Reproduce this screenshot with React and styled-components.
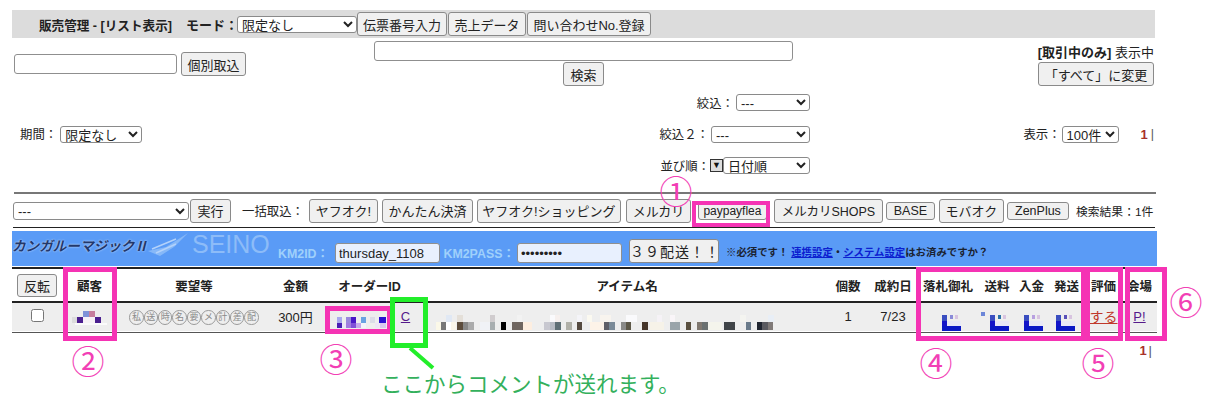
import React from "react";
import styled, { createGlobalStyle } from "styled-components";

const Global = createGlobalStyle`
  html, body { margin: 0; padding: 0; background: #fff; overflow: hidden; }
  body { font-family: "Liberation Sans", "Noto Sans CJK JP", sans-serif; font-size: 13px; color: #222; }
`;

const Page = styled.div`
  position: relative;
  width: 1213px;
  height: 415px;
  overflow: hidden;
  padding: 10px 56px 0 12px;
  box-sizing: border-box;
`;

const Button = styled.button`
  font: ${(p) => p.$fs || 13}px "Liberation Sans", "Noto Sans CJK JP", sans-serif;
  color: #222;
  height: ${(p) => p.$h || 24}px;
  width: ${(p) => (p.$w ? `${p.$w}px` : "auto")};
  padding: 0;
  background: #f0f0f0;
  border: 1px solid #8a8a8a;
  border-radius: 3px;
  white-space: nowrap;
  flex: none;
`;

const Select = styled.select`
  font: 13px "Liberation Sans", "Noto Sans CJK JP", sans-serif;
  color: #222;
  width: ${(p) => p.$w}px;
  height: ${(p) => p.$h || 17}px;
  padding: 0;
  background: #fff;
  border: 1px solid #8a8a8a;
  border-radius: 3px;
  flex: none;
`;

const TextInput = styled.input`
  box-sizing: border-box;
  width: ${(p) => p.$w}px;
  height: ${(p) => p.$h || 20}px;
  margin: 0;
  padding: 0 3px;
  font: 13px "Liberation Sans", sans-serif;
  color: #222;
  background: ${(p) => p.$bg || "#fff"};
  border: 1px solid #8f8f8f;
  border-radius: 3px;
  flex: none;
`;

const HeaderBar = styled.div`
  display: flex;
  align-items: center;
  height: 28px;
  padding-left: 27px;
  background: #dcdcdc;
  width: 1143px;
  box-sizing: border-box;
`;
const HeaderTitle = styled.b`
  font-size: 12.6px;
  width: 147px;
  flex: none;
  white-space: nowrap;
`;
const HeaderLabel = styled.b`
  width: 51px;
  flex: none;
  white-space: nowrap;
`;

const SearchRow = styled.div`
  display: grid;
  grid-template-columns: 362px 419px 1fr;
  height: 48px;
  width: 1143px;
`;
const SingleFetch = styled.div`
  display: flex;
  align-items: center;
  gap: 4px;
  padding: 14px 0 0 2px;
  height: 24px;
`;
const CenterSearch = styled.div`
  display: flex;
  flex-direction: column;
  align-items: center;
  padding-top: 3px;
  gap: 1px;
`;
const StatusBox = styled.div`
  display: flex;
  flex-direction: column;
  align-items: flex-end;
  justify-content: flex-end;
  padding-right: 1px;
  gap: 1px;
`;

const FilterRow = styled.div`
  display: grid;
  grid-template-columns: 560px 238px 1fr;
  width: 1143px;
  margin-top: 8px;
  height: 80px;
  font-size: 12.4px;
`;
const PeriodCell = styled.div`
  display: flex;
  align-items: center;
  padding-left: 8px;
  gap: 3px;
`;
const FilterStack = styled.div`
  display: flex;
  flex-direction: column;
  align-items: flex-end;
  justify-content: space-between;
`;
const FilterLine = styled.div`
  display: flex;
  align-items: center;
  gap: ${(p) => p.$gap ?? 2}px;
  height: 17px;
  white-space: nowrap;
`;
const SortIcon = styled.span`
  display: inline-flex;
  align-items: center;
  justify-content: center;
  box-sizing: border-box;
  width: 13px;
  height: 13px;
  border: 1px solid #333;
  background: #ddd;
  color: #111;
  font-size: 9px;
  line-height: 1;
`;
const DisplayCell = styled.div`
  display: flex;
  align-items: center;
  justify-content: flex-end;
  gap: 1px;
`;
const PageNum = styled.b`
  color: #a8322a;
  font-size: 13px;
  margin-left: 21px;
`;
const PageBar = styled.span`
  color: #555;
  margin-left: 2px;
  margin-right: 1px;
`;

const Rule = styled.hr`
  border: 0;
  height: ${(p) => p.$t || 1}px;
  background: ${(p) => p.$c || "#333"};
  margin: ${(p) => p.$m || 0};
  width: 1142px;
`;

const Toolbar = styled.div`
  display: flex;
  align-items: center;
  height: 33px;
  width: 1143px;
  padding-left: 1px;
  box-sizing: border-box;
  white-space: nowrap;
`;
const ToolButton = styled(Button)`
  margin-left: ${(p) => p.$ml ?? 4}px;
`;
const ToolLabel = styled.span`
  margin-left: ${(p) => p.$ml}px;
  flex: none;
  font-size: ${(p) => p.$fs || 12.4}px;
`;

const Band = styled.div`
  display: flex;
  width: 1145px;
  height: 35px;
  margin-top: 3px;
  background: #5a9bf6;
`;
const Brand = styled.div`
  display: flex;
  align-items: center;
  height: 27px;
  width: 266px;
  flex: none;
`;
const BrandName = styled.b`
  color: #22386b;
  font-style: italic;
  font-size: 13.6px;
  white-space: nowrap;
  width: 134px;
  flex: none;
  text-shadow: 0 0 2px #dbe9ff;
`;
const SeinoMark = styled.span`
  color: #8dbcf8;
  font-size: 25px;
  margin-left: 2px;
`;
const BandForm = styled.div`
  display: flex;
  align-items: center;
  height: 35px;
  padding-top: 9px;
  box-sizing: border-box;
`;
const BandLabel = styled.b`
  color: #9fd0fb;
  font-size: 12.4px;
  white-space: nowrap;
  width: ${(p) => p.$w}px;
  flex: none;
`;
const ShipButton = styled(Button)`
  margin: 0 7px 4px 7px;
  letter-spacing: 1px;
  font-size: 14px;
`;
const BandNote = styled.b`
  color: #1a2230;
  font-size: 10.4px;
  white-space: nowrap;
  margin-bottom: 3px;
`;
const BandLink = styled.a`
  color: #0c20d0;
  text-decoration: underline;
`;

const Table = styled.table`
  border-collapse: collapse;
  table-layout: fixed;
  width: 1145px;
  margin-top: 1px;
`;
const HeadCell = styled.th`
  height: 34px;
  padding: 0 ${(p) => p.$pr || 0}px 0 0;
  font-size: 12.5px;
  font-weight: bold;
  color: #222;
  white-space: nowrap;
  text-align: center;
  border-top: 2px solid #222;
  border-bottom: 2px solid #222;
  box-sizing: border-box;
`;
const DataCell = styled.td`
  height: 30px;
  padding: 0 ${(p) => p.$pr || 0}px 2px 0;
  text-align: center;
  white-space: nowrap;
  font-size: 13px;
  background: linear-gradient(#eeeeee 0 28px, #fff 28px);
  border-bottom: 1px solid #555;
  box-sizing: border-box;
`;
const Check = styled.input`
  width: 13px;
  height: 13px;
  margin: 0 0 2px 0;
  vertical-align: middle;
`;
const Stamps = styled.span`
  display: inline-flex;
`;
const Stamp = styled.span`
  display: inline-flex;
  align-items: center;
  justify-content: center;
  box-sizing: border-box;
  width: 14.4px;
  height: 14.4px;
  font-size: 9px;
  line-height: 1;
  color: #8a8a8a;
  border: 1px solid #9a9a9a;
  border-radius: 50%;
`;
const PlainLink = styled.a`
  color: ${(p) => p.$c || "#551a8b"};
  text-decoration: underline;
  font-size: ${(p) => p.$fs || 13}px;
`;
const Pager = styled.div`
  display: flex;
  justify-content: flex-end;
  width: 1141px;
  margin-top: 11px;
  line-height: 14px;
`;

/* annotations laid over the screenshot */
const Frame = styled.div`
  position: absolute;
  box-sizing: border-box;
  left: ${(p) => p.$x}px;
  top: ${(p) => p.$y}px;
  width: ${(p) => p.$w}px;
  height: ${(p) => p.$h}px;
  border: ${(p) => p.$b || 5}px solid ${(p) => p.$c || "#f533b4"};
`;
const Mark = styled.span`
  position: absolute;
  left: ${(p) => p.$x}px;
  top: ${(p) => p.$y}px;
  width: 34px;
  text-align: center;
  color: #f23fb5;
  font: 33px/34px "Noto Sans CJK JP", sans-serif;
`;
const Note = styled.div`
  position: absolute;
  left: 381px;
  top: 369px;
  color: #33b05c;
  font: 21.5px/28px "Noto Sans CJK JP", sans-serif;
  white-space: nowrap;
`;
const Leader = styled.svg`
  position: absolute;
  left: 400px;
  top: 340px;
`;

const MosaicSvg = styled.svg`
  display: block;
  position: absolute;
  left: ${(p) => p.$x}px;
  top: ${(p) => p.$y}px;
`;
const Mosaic = ({ x, y, w, h, cells }) => (
  <MosaicSvg $x={x} $y={y} width={w} height={h} viewBox={`0 0 ${w} ${h}`}>
    {cells.map(([cx, cy, cw, ch, c], i) => (
      <rect key={i} x={cx} y={cy} width={cw} height={ch} fill={c} />
    ))}
  </MosaicSvg>
);

const customerCells = [
  [11, 0, 6, 6, "#7f93d8"], [17, 0, 6, 6, "#c77f9e"], [14, -1, 6, 1, "#eedfc8"],
  [0, 6, 5, 6, "#dcdcdc"], [5, 6, 6, 6, "#4b2090"], [11, 6, 12, 6, "#f7f2f6"], [23, 6, 6, 6, "#4b2090"],
  [3, 12, 32, 2, "#fbfbfb"],
];
const orderCells = [
  [0, 0, 5, 6, "#a9a8ee"], [0, 6, 5, 5, "#4a1fb4"], [5, 6, 4, 5, "#ece8f6"],
  [9, 0, 5, 6, "#9a86dc"], [14, 0, 5, 6, "#4a18c8"], [9, 6, 5, 5, "#a27ce0"], [14, 6, 5, 5, "#8050d8"], [19, 6, 5, 5, "#c5aaec"],
  [24, 0, 5, 6, "#6aa2e2"], [24, 6, 5, 5, "#f3f3fa"], [33, 0, 5, 6, "#dcdce8"], [38, 6, 5, 5, "#ede4f6"],
  [42, 0, 7, 6, "#2a10d2"], [43, 6, 6, 5, "#d8c8f0"], [49, 0, 4, 6, "#f3f3f8"],
];
const itemDark = [
  [441, 5, "#777"], [457, 6, "#5c4c3c"], [463, 5, "#888"], [468, 6, "#aaa"], [490, 5, "#a8aeb0"], [501, 5, "#000"],
  [512, 11, "#6f6660"], [544, 6, "#c8c8d0"], [550, 5, "#b8bcc4"], [555, 6, "#5f6f75"], [566, 6, "#b0b0a8"], [577, 5, "#554a40"],
  [604, 5, "#606068"], [609, 6, "#7a8a98"], [621, 5, "#8a8a88"], [626, 5, "#5d5848"], [642, 6, "#45352a"], [670, 10, "#9aa4aa"],
  [686, 5, "#5a5040"], [697, 5, "#807870"], [702, 6, "#6a7070"], [724, 11, "#404448"], [746, 5, "#6a7a8a"], [757, 5, "#202530"],
  [762, 6, "#5a5a60"], [768, 5, "#807a78"],
];
const itemPale = [
  [446, 6, "#e0e8f4"], [457, 6, "#e4dfd8"], [490, 5, "#d0ccce"], [517, 5, "#f2f2f2"], [550, 6, "#fafafc"], [555, 5, "#f6f0ee"],
  [577, 5, "#f4f4f8"], [587, 5, "#fbf9f0"], [600, 11, "#f8f4ee"], [626, 11, "#fafafc"], [657, 5, "#f5f2f6"], [670, 5, "#f9f5f8"],
  [768, 6, "#e8eef6"], [740, 6, "#f4f4f0"],
];
const itemCells = [
  ...itemPale.map(([x, w, c]) => [x - 436, 0, w, 7, c]),
  ...[[436, 5, "#fbf8e8"], [446, 5, "#fff"], [451, 5, "#faf6ea"], [480, 10, "#f0f2f6"], [520, 12, "#fdeee0"], [590, 14, "#fdf3e8"], [650, 14, "#f6f2e8"], [708, 14, "#f4f4ec"]].map(
    ([x, w, c]) => [x - 436, 7, w, 8, c]
  ),
  ...itemDark.map(([x, w, c]) => [x - 436, 7, w, 8, c]),
];
const blurb = (a, b) => [
  [0, 0, 5, 6, "#3a4ec0"], [0, 6, 5, 5, "#1414c8"], [a, 0, 3, 4, b], [a + 5, 0, 3, 4, "#d8c4e0"],
  [0, 11, 19, 5, "#0a18c4"], [5, 6, 14, 5, "#e8e8f6"],
];

const stamps = ["私", "送", "時", "名", "要", "メ", "計", "差", "配"];
const cols = [50, 55, 154, 49, 72, 35, 400, 42, 48, 62, 36, 33, 37, 37, 35];

export default function App() {
  return (
    <Page>
      <Global />
      <HeaderBar>
        <HeaderTitle>販売管理 - [リスト表示]</HeaderTitle>
        <HeaderLabel>モード：</HeaderLabel>
        <Select $w={120}><option>限定なし</option></Select>
        <Button $w={90} $h={24}>伝票番号入力</Button>
        <ToolButton $ml={1} $w={78}>売上データ</ToolButton>
        <ToolButton $ml={1} $w={124}>問い合わせNo.登録</ToolButton>
      </HeaderBar>

      <SearchRow>
        <SingleFetch>
          <TextInput $w={163} />
          <Button $w={65}>個別取込</Button>
        </SingleFetch>
        <CenterSearch>
          <TextInput $w={419} />
          <Button $w={41}>検索</Button>
        </CenterSearch>
        <StatusBox>
          <span><b>[取引中のみ]</b> 表示中</span>
          <Button $w={116}>「すべて」に変更</Button>
        </StatusBox>
      </SearchRow>

      <FilterRow>
        <PeriodCell>
          <span>期間：</span>
          <Select $w={82}><option>限定なし</option></Select>
        </PeriodCell>
        <FilterStack>
          <FilterLine><span>絞込：</span><Select $w={74}><option>---</option></Select></FilterLine>
          <FilterLine><span>絞込２：</span><Select $w={99}><option>---</option></Select></FilterLine>
          <FilterLine $gap={0}>
            <span>並び順：</span>
            <SortIcon>▼</SortIcon>
            <Select $w={87}><option>日付順</option></Select>
          </FilterLine>
        </FilterStack>
        <DisplayCell>
          <span>表示：</span>
          <Select $w={57}><option>100件</option></Select>
          <PageNum>1</PageNum>
          <PageBar>|</PageBar>
        </DisplayCell>
      </FilterRow>

      <Rule $t={2} $c="#777" $m="18px 0 0 2px" />

      <Toolbar>
        <Select $w={176} $h={18}><option>---</option></Select>
        <ToolButton $ml={1} $w={41}>実行</ToolButton>
        <ToolLabel $ml={11}>一括取込：</ToolLabel>
        <ToolButton $ml={5} $w={69}>ヤフオク!</ToolButton>
        <ToolButton $w={91}>かんたん決済</ToolButton>
        <ToolButton $w={144}>ヤフオク!ショッピング</ToolButton>
        <ToolButton $ml={5} $w={65}>メルカリ</ToolButton>
        <ToolButton $ml={7} $w={69} $h={18} $fs={12}>paypayflea</ToolButton>
        <ToolButton $ml={7} $w={109} $fs={12.5}>メルカリSHOPS</ToolButton>
        <ToolButton $ml={3} $w={49} $h={18} $fs={12.5}>BASE</ToolButton>
        <ToolButton $w={65}>モバオク</ToolButton>
        <ToolButton $ml={3} $w={62} $h={18} $fs={12.5}>ZenPlus</ToolButton>
        <ToolLabel $ml={7} $fs={11.8}>検索結果：1件</ToolLabel>
      </Toolbar>

      <Rule $t={1} $c="#222" $m="0 0 0 1px" />

      <Band>
        <Brand>
          <BrandName>カンガルーマジックⅡ</BrandName>
          <svg width="44" height="26" viewBox="0 0 44 26">
            <path d="M2 19 L20 15 L42 1 L28 15 L14 24 Z" fill="#86b8f8" />
            <path d="M6 17 L30 7 M10 21 L30 12" stroke="#b3d2fa" strokeWidth="1.4" />
          </svg>
          <SeinoMark>SEINO</SeinoMark>
        </Brand>
        <BandForm>
          <BandLabel $w={57}>KM2ID：</BandLabel>
          <TextInput $w={105} $bg="#e8f0fe" defaultValue="thursday_1108" />
          <BandLabel $w={77}>&nbsp;KM2PASS：</BandLabel>
          <TextInput $w={105} $bg="#e8f0fe" type="password" defaultValue="thursday1" />
          <ShipButton $w={90}>３９配送！！</ShipButton>
          <BandNote>
            ※必須です！ <BandLink>連携設定</BandLink>・<BandLink>システム設定</BandLink>はお済みですか？
          </BandNote>
        </BandForm>
      </Band>

      <Table>
        <colgroup>
          {cols.map((w, i) => <col key={i} width={w} />)}
        </colgroup>
        <thead>
          <tr>
            <HeadCell><Button $w={40} $h={23}>反転</Button></HeadCell>
            <HeadCell>顧客</HeadCell>
            <HeadCell>要望等</HeadCell>
            <HeadCell>金額</HeadCell>
            <HeadCell colSpan={2} $pr={8}>オーダーID</HeadCell>
            <HeadCell>アイテム名</HeadCell>
            <HeadCell>個数</HeadCell>
            <HeadCell>成約日</HeadCell>
            <HeadCell>落札御礼</HeadCell>
            <HeadCell>送料</HeadCell>
            <HeadCell>入金</HeadCell>
            <HeadCell>発送</HeadCell>
            <HeadCell>評価</HeadCell>
            <HeadCell>会場</HeadCell>
          </tr>
        </thead>
        <tbody>
          <tr>
            <DataCell><Check type="checkbox" /></DataCell>
            <DataCell />
            <DataCell>
              <Stamps>{stamps.map((s) => <Stamp key={s}>{s}</Stamp>)}</Stamps>
            </DataCell>
            <DataCell>300円</DataCell>
            <DataCell />
            <DataCell $pr={8}><PlainLink>C</PlainLink></DataCell>
            <DataCell />
            <DataCell>1</DataCell>
            <DataCell>7/23</DataCell>
            <DataCell />
            <DataCell />
            <DataCell />
            <DataCell />
            <DataCell><PlainLink $c="#c0392b" $fs={14}>する</PlainLink></DataCell>
            <DataCell><PlainLink>P!</PlainLink></DataCell>
          </tr>
        </tbody>
      </Table>

      <Pager><PageNum>1</PageNum><PageBar>|</PageBar></Pager>

      <Mosaic x={72} y={311} w={36} h={15} cells={customerCells} />
      <Mosaic x={337} y={317} w={53} h={11} cells={orderCells} />
      <Mosaic x={436} y={315} w={340} h={15} cells={itemCells} />
      <Mosaic x={942} y={315} w={19} h={16} cells={blurb(8, "#8a8ad8")} />
      <Mosaic x={981} y={312} w={6} h={6} cells={[[0, 0, 4, 4, "#6c86d8"]]} />
      <Mosaic x={990} y={315} w={19} h={16} cells={blurb(8, "#2a70a8")} />
      <Mosaic x={1024} y={315} w={19} h={16} cells={blurb(8, "#b8a0e0")} />
      <Mosaic x={1056} y={315} w={19} h={16} cells={blurb(8, "#5a50b8")} />

      <Frame $x={692} $y={201} $w={78} $h={26} $b={4} />
      <Frame $x={63} $y={267} $w={54} $h={74} />
      <Frame $x={325} $y={306} $w={67} $h={28} />
      <Frame $x={390} $y={297} $w={38} $h={51} $c="#22ee2a" />
      <Frame $x={916} $y={267} $w={170} $h={74} />
      <Frame $x={1085} $y={267} $w={38} $h={74} />
      <Frame $x={1125} $y={267} $w={42} $h={74} />

      <Leader width="40" height="34" viewBox="0 0 40 34">
        <path d="M10 8 L33 28" stroke="#22ee2a" strokeWidth="4" fill="none" />
      </Leader>

      <Mark $x={659} $y={173}>①</Mark>
      <Mark $x={71} $y={343}>②</Mark>
      <Mark $x={319} $y={341}>③</Mark>
      <Mark $x={919} $y={345}>④</Mark>
      <Mark $x={1081} $y={345}>⑤</Mark>
      <Mark $x={1169} $y={284}>⑥</Mark>

      <Note>ここからコメントが送れます。</Note>
    </Page>
  );
}
